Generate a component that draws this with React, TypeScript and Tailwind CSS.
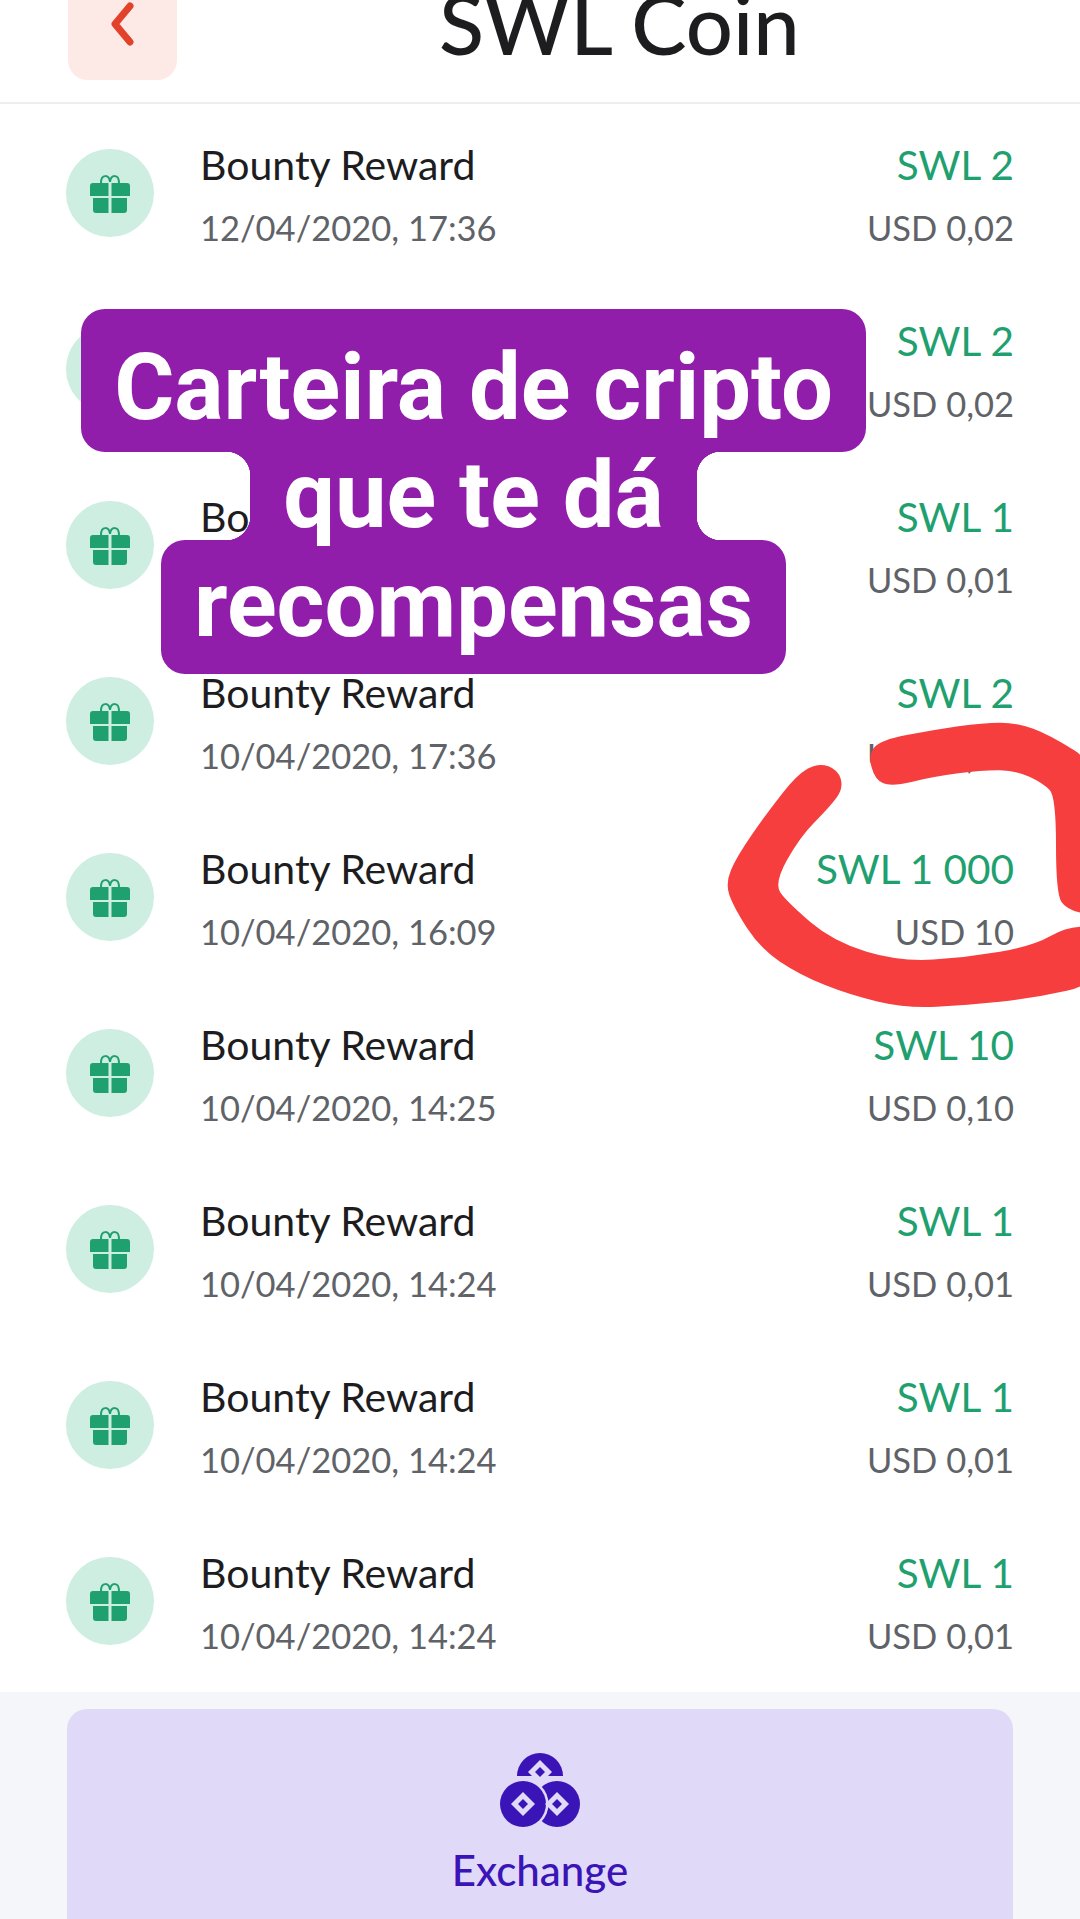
const rows = [
  { date: '12/04/2020, 17:36', swl: 'SWL 2', usd: 'USD 0,02' },
  { date: '11/04/2020, 17:36', swl: 'SWL 2', usd: 'USD 0,02' },
  { date: '11/04/2020, 09:12', swl: 'SWL 1', usd: 'USD 0,01' },
  { date: '10/04/2020, 17:36', swl: 'SWL 2', usd: 'USD 0,02' },
  { date: '10/04/2020, 16:09', swl: 'SWL 1 000', usd: 'USD 10' },
  { date: '10/04/2020, 14:25', swl: 'SWL 10', usd: 'USD 0,10' },
  { date: '10/04/2020, 14:24', swl: 'SWL 1', usd: 'USD 0,01' },
  { date: '10/04/2020, 14:24', swl: 'SWL 1', usd: 'USD 0,01' },
  { date: '10/04/2020, 14:24', swl: 'SWL 1', usd: 'USD 0,01' },
]

// hand-traced outline of the marker stroke, smoothed through midpoints
const smooth = (pts: number[][]) => {
  const mid = (a: number[], b: number[]) => `${(a[0] + b[0]) / 2} ${(a[1] + b[1]) / 2}`
  let d = `M${mid(pts[pts.length - 1], pts[0])}`
  pts.forEach((p, i) => {
    d += `Q${p[0]} ${p[1]} ${mid(p, pts[(i + 1) % pts.length])}`
  })
  return d + 'Z'
}

const lowerStroke = [
  [355, 188], [415, 210], [430, 265], [390, 320], [300, 410], [222, 550], [260, 605], [400, 725], [600, 785],
  [800, 772], [1000, 738], [1100, 680], [1200, 680], [1200, 850], [1000, 895], [800, 915], [620, 925], [450, 885],
  [300, 825], [180, 745], [100, 620], [76, 550], [110, 470], [200, 340], [290, 225],
]

const upperStroke = [
  [505, 165], [540, 120], [700, 90], [850, 68], [950, 68], [1050, 105], [1200, 200], [1200, 650], [1100, 630],
  [1068, 580], [1068, 290], [1030, 250], [950, 212], [850, 210], [700, 230], [575, 260], [525, 240],
]

const GiftIcon = () => (
  <svg width="42" height="44" viewBox="0 0 42 44" fill="#1fa06f">
    <path d="M12 12c0-9 8-9 9-1 1-8 9-8 9 1" fill="none" stroke="#1fa06f" strokeWidth="2" />
    <path d="M4 12h15.500v13H1V15a3 3 0 0 1 3-3zM22.500 12H38a3 3 0 0 1 3 3v10H22.500z" />
    <path d="M4 27h15.500v15H7a3 3 0 0 1-3-3zM22.500 27H38v12a3 3 0 0 1-3 3H22.500z" />
  </svg>
)

const CoinsIcon = () => (
  <svg width="80" height="80" viewBox="0 0 80 80">
    <path d="M17 28a23 23 0 0 1 46 0z" fill="#3a14b7" />
    <circle cx="57" cy="56" r="23" fill="#3a14b7" />
    <circle cx="23" cy="56" r="25.500" fill="#e0daf8" />
    <circle cx="23" cy="56" r="23" fill="#3a14b7" />
    <path d="M40 12l12 12-12 12-12-12z" fill="#e0daf8" />
    <path d="M40 19l5 5-5 5-5-5z" fill="#3a14b7" />
    <path d="M23 44l12 12-12 12-12-12z" fill="#e0daf8" />
    <path d="M23 51l5 5-5 5-5-5z" fill="#3a14b7" />
    <path d="M57 44l12 12-12 12-12-12z" fill="#e0daf8" />
    <path d="M57 51l5 5-5 5-5-5z" fill="#3a14b7" />
  </svg>
)

export default function App() {
  return (
    <div className="relative h-[1919px] w-[1080px] overflow-hidden bg-white font-['Lato',sans-serif]">
      <header className="flex h-[104px] items-end overflow-hidden border-b-2 border-[#eeeeee] pb-[22px] pl-[68px]">
        <button className="flex h-[110px] w-[109px] shrink-0 items-end justify-center rounded-[20px] bg-[#fde9e5] pb-[34px]">
          <svg width="26" height="44" viewBox="0 0 26 44" fill="none" stroke="#e2412a" strokeWidth="7" strokeLinecap="round" strokeLinejoin="round">
            <path d="M20 4 5 22l15 18" />
          </svg>
        </button>
        <h1 className="mb-[20px] ml-[262px] text-[83px] leading-[74px] font-medium whitespace-nowrap text-[#1d1d1f]">SWL Coin</h1>
      </header>

      <ul className="h-[1588px] bg-white pt-px">
        {rows.map((row, i) => (
          <li key={i} className="flex h-[176px] items-center px-[66px]">
            <div className="flex h-[88px] w-[88px] shrink-0 items-center justify-center rounded-full bg-[#cdeee1]">
              <GiftIcon />
            </div>
            <div className="mt-[5px] ml-[46px] flex-1">
              <p className="text-[41px] leading-[63px] text-[#1d1d1f]">Bounty Reward</p>
              <p className="text-[34.500px] leading-[63px] text-[#5f6368]">{row.date}</p>
            </div>
            <div className="mt-[5px] text-right">
              <p className="text-[40.500px] leading-[63px] text-[#1fa06f]">{row.swl}</p>
              <p className="text-[34.500px] leading-[63px] text-[#5f6368]">{row.usd}</p>
            </div>
          </li>
        ))}
      </ul>

      <footer className="h-[230px] bg-[#f5f6fa] px-[67px] pt-[17px]">
        <button className="flex h-[260px] w-full flex-col items-center rounded-[20px] bg-[#e0daf8] pt-[39px]">
          <CoinsIcon />
          <span className="mt-[17px] text-[42px] leading-[50px] font-medium text-[#3a14b7]">Exchange</span>
        </button>
      </footer>

      <svg className="absolute top-[700px] left-[700px]" width="380" height="320" viewBox="0 0 1140 960" fill="#f63e3e">
        <path d={smooth(lowerStroke)} />
        <path d={smooth(upperStroke)} />
      </svg>

      <div className="absolute top-[309px] left-[81px] flex w-[785px] flex-col items-center font-['Roboto',sans-serif] font-bold text-white">
        <div className="flex h-[143px] w-full items-center justify-center rounded-[24px] bg-[#901eab] pt-[14px] text-[92px] leading-none">Carteira de cripto</div>
        <div className="relative flex h-[88px] w-[447px] items-center justify-center bg-[#901eab] text-[92px] leading-none">
          <span className="absolute top-0 -left-[24px] h-[24px] w-[24px] bg-[radial-gradient(circle_at_0_100%,transparent_24px,#901eab_24.5px)]" />
          <span className="absolute top-0 -right-[24px] h-[24px] w-[24px] bg-[radial-gradient(circle_at_100%_100%,transparent_24px,#901eab_24.5px)]" />
          <span className="absolute bottom-0 -left-[24px] h-[24px] w-[24px] bg-[radial-gradient(circle_at_0_0,transparent_24px,#901eab_24.5px)]" />
          <span className="absolute -right-[24px] bottom-0 h-[24px] w-[24px] bg-[radial-gradient(circle_at_100%_0,transparent_24px,#901eab_24.5px)]" />
          que te dá
        </div>
        <div className="flex h-[134px] w-[625px] items-center justify-center rounded-[24px] bg-[#901eab] pb-[4px] text-[92px] leading-none">recompensas</div>
      </div>
    </div>
  )
}
